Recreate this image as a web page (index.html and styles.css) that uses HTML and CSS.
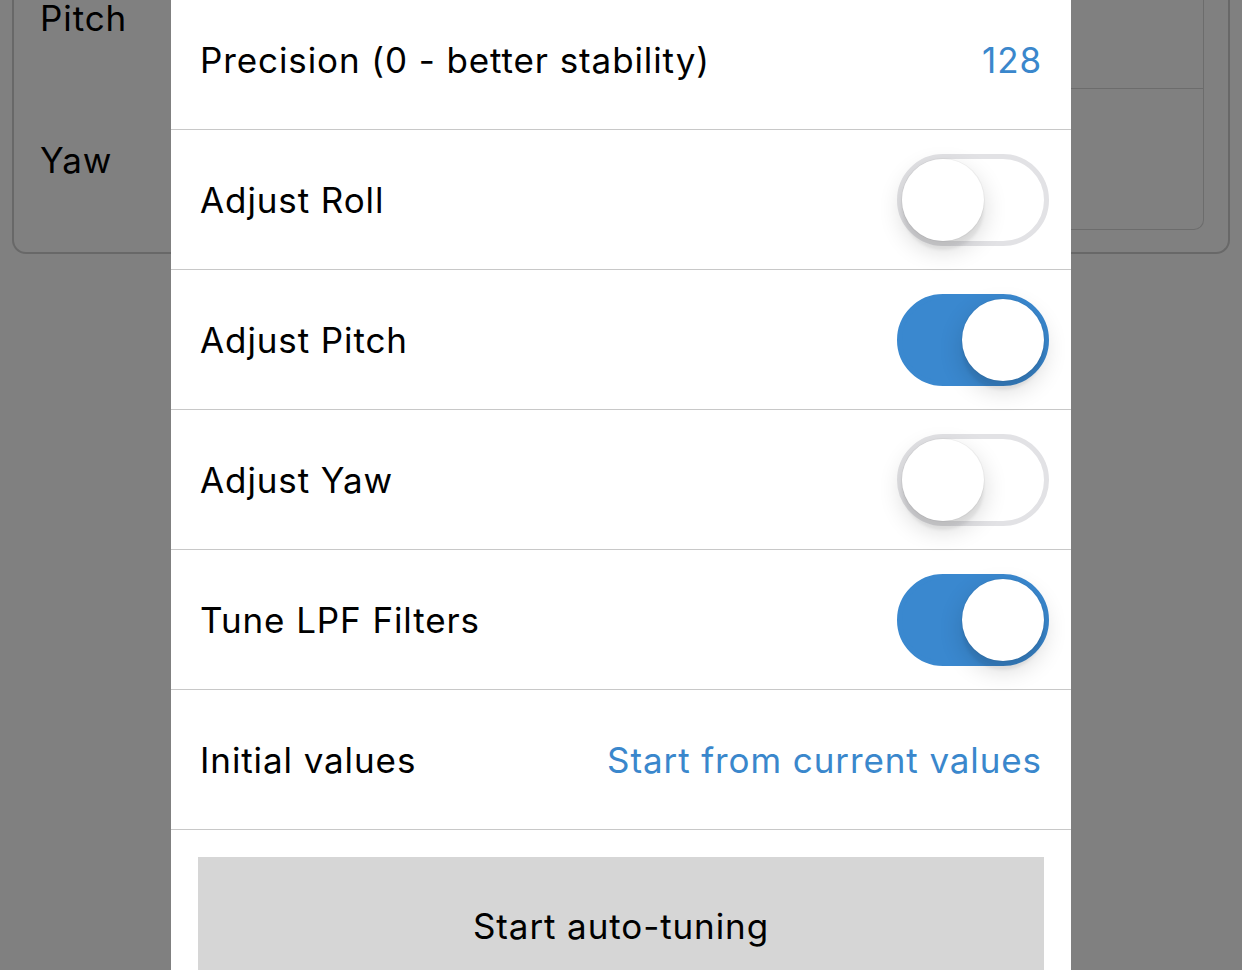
FILE: index.html
```html
<!DOCTYPE html>
<html>
<head>
<meta charset="utf-8">
<link rel="stylesheet" href="styles.css">
</head>
<body>
<div class="page">
  <div class="card">
    <div class="labels">
      <div class="label">Pitch</div>
      <div class="label">Yaw</div>
    </div>
    <div class="inner">
      <div class="inner-row"></div>
      <div class="inner-row"></div>
    </div>
  </div>
</div>

<div class="modal">
  <div class="row">
    <span class="text">Precision (0 - better stability)</span>
    <span class="value">128</span>
  </div>
  <div class="row">
    <span class="text">Adjust Roll</span>
    <span class="toggle"><span class="thumb"></span></span>
  </div>
  <div class="row">
    <span class="text">Adjust Pitch</span>
    <span class="toggle on"><span class="thumb"></span></span>
  </div>
  <div class="row">
    <span class="text">Adjust Yaw</span>
    <span class="toggle"><span class="thumb"></span></span>
  </div>
  <div class="row">
    <span class="text">Tune LPF Filters</span>
    <span class="toggle on"><span class="thumb"></span></span>
  </div>
  <div class="row">
    <span class="text">Initial values</span>
    <span class="value">Start from current values</span>
  </div>
  <div class="action">
    <button class="btn">Start auto-tuning</button>
  </div>
</div>
</body>
</html>
```

FILE: styles.css
```css
html, body {
  margin: 0;
  padding: 0;
  height: 100%;
  overflow: hidden;
}
body {
  background: #808080;
  font-family: Inter, "Noto Sans", "Liberation Sans", sans-serif;
  color: #000;
  position: relative;
}
.page {
  padding: 0 12px;
}
.card {
  margin-top: -60px;
  height: 314px;
  border: 2px solid #686868;
  border-top: none;
  border-radius: 0 0 14px 14px;
  display: flex;
  box-sizing: border-box;
}
.labels {
  width: 180px;
  padding-left: 26px;
  padding-top: 48px;
}
.label {
  font-size: 35px;
  letter-spacing: 0.9px;
  height: 142px;
  line-height: 60px;
}
.inner {
  flex: 1;
  margin: 0 24px 22px 60px;
  border: 1px solid #6c6c6c;
  border-top: none;
  border-radius: 0 0 10px 10px;
  display: flex;
  flex-direction: column;
}
.inner-row {
  height: 148px;
  border-bottom: 1px solid #6c6c6c;
}
.inner-row:last-child {
  border-bottom: none;
  flex: 1;
}
.modal {
  position: absolute;
  left: 171px;
  top: 0;
  bottom: 0;
  width: 900px;
  background: #fff;
}
.row {
  height: 140px;
  box-sizing: border-box;
  border-bottom: 1px solid #c8c8c8;
  display: flex;
  align-items: center;
  justify-content: space-between;
  padding: 0 29px 0 29px;
}
.row:first-child {
  margin-top: -10px;
}
.text {
  font-size: 35px;
  letter-spacing: 0.9px;
}
.value {
  font-size: 35px;
  color: #3a87cc;
  letter-spacing: 0.9px;
}
.toggle {
  width: 152px;
  height: 92px;
  box-sizing: border-box;
  border-radius: 46px;
  border: 5px solid #e2e2e5;
  background: #fff;
  margin-right: -7px;
  position: relative;
  display: flex;
  align-items: center;
}
.toggle .thumb {
  width: 82px;
  height: 82px;
  border-radius: 50%;
  background: #fff;
  box-shadow: 0 9px 3px rgba(0,0,0,0.06), 0 9px 24px rgba(0,0,0,0.16), 0 0 0 1px rgba(0,0,0,0.04);
}
.toggle.on {
  background: #3a88cf;
  border-color: #3a88cf;
  justify-content: flex-end;
}
.action {
  padding: 27px 27px 0 27px;
}
.btn {
  display: block;
  width: 100%;
  height: 138px;
  border: none;
  border-radius: 0;
  background: #d6d6d6;
  font-family: Inter, "Noto Sans", "Liberation Sans", sans-serif;
  font-size: 35px;
  color: #000;
  letter-spacing: 0.9px;
  padding: 0;
}
```
